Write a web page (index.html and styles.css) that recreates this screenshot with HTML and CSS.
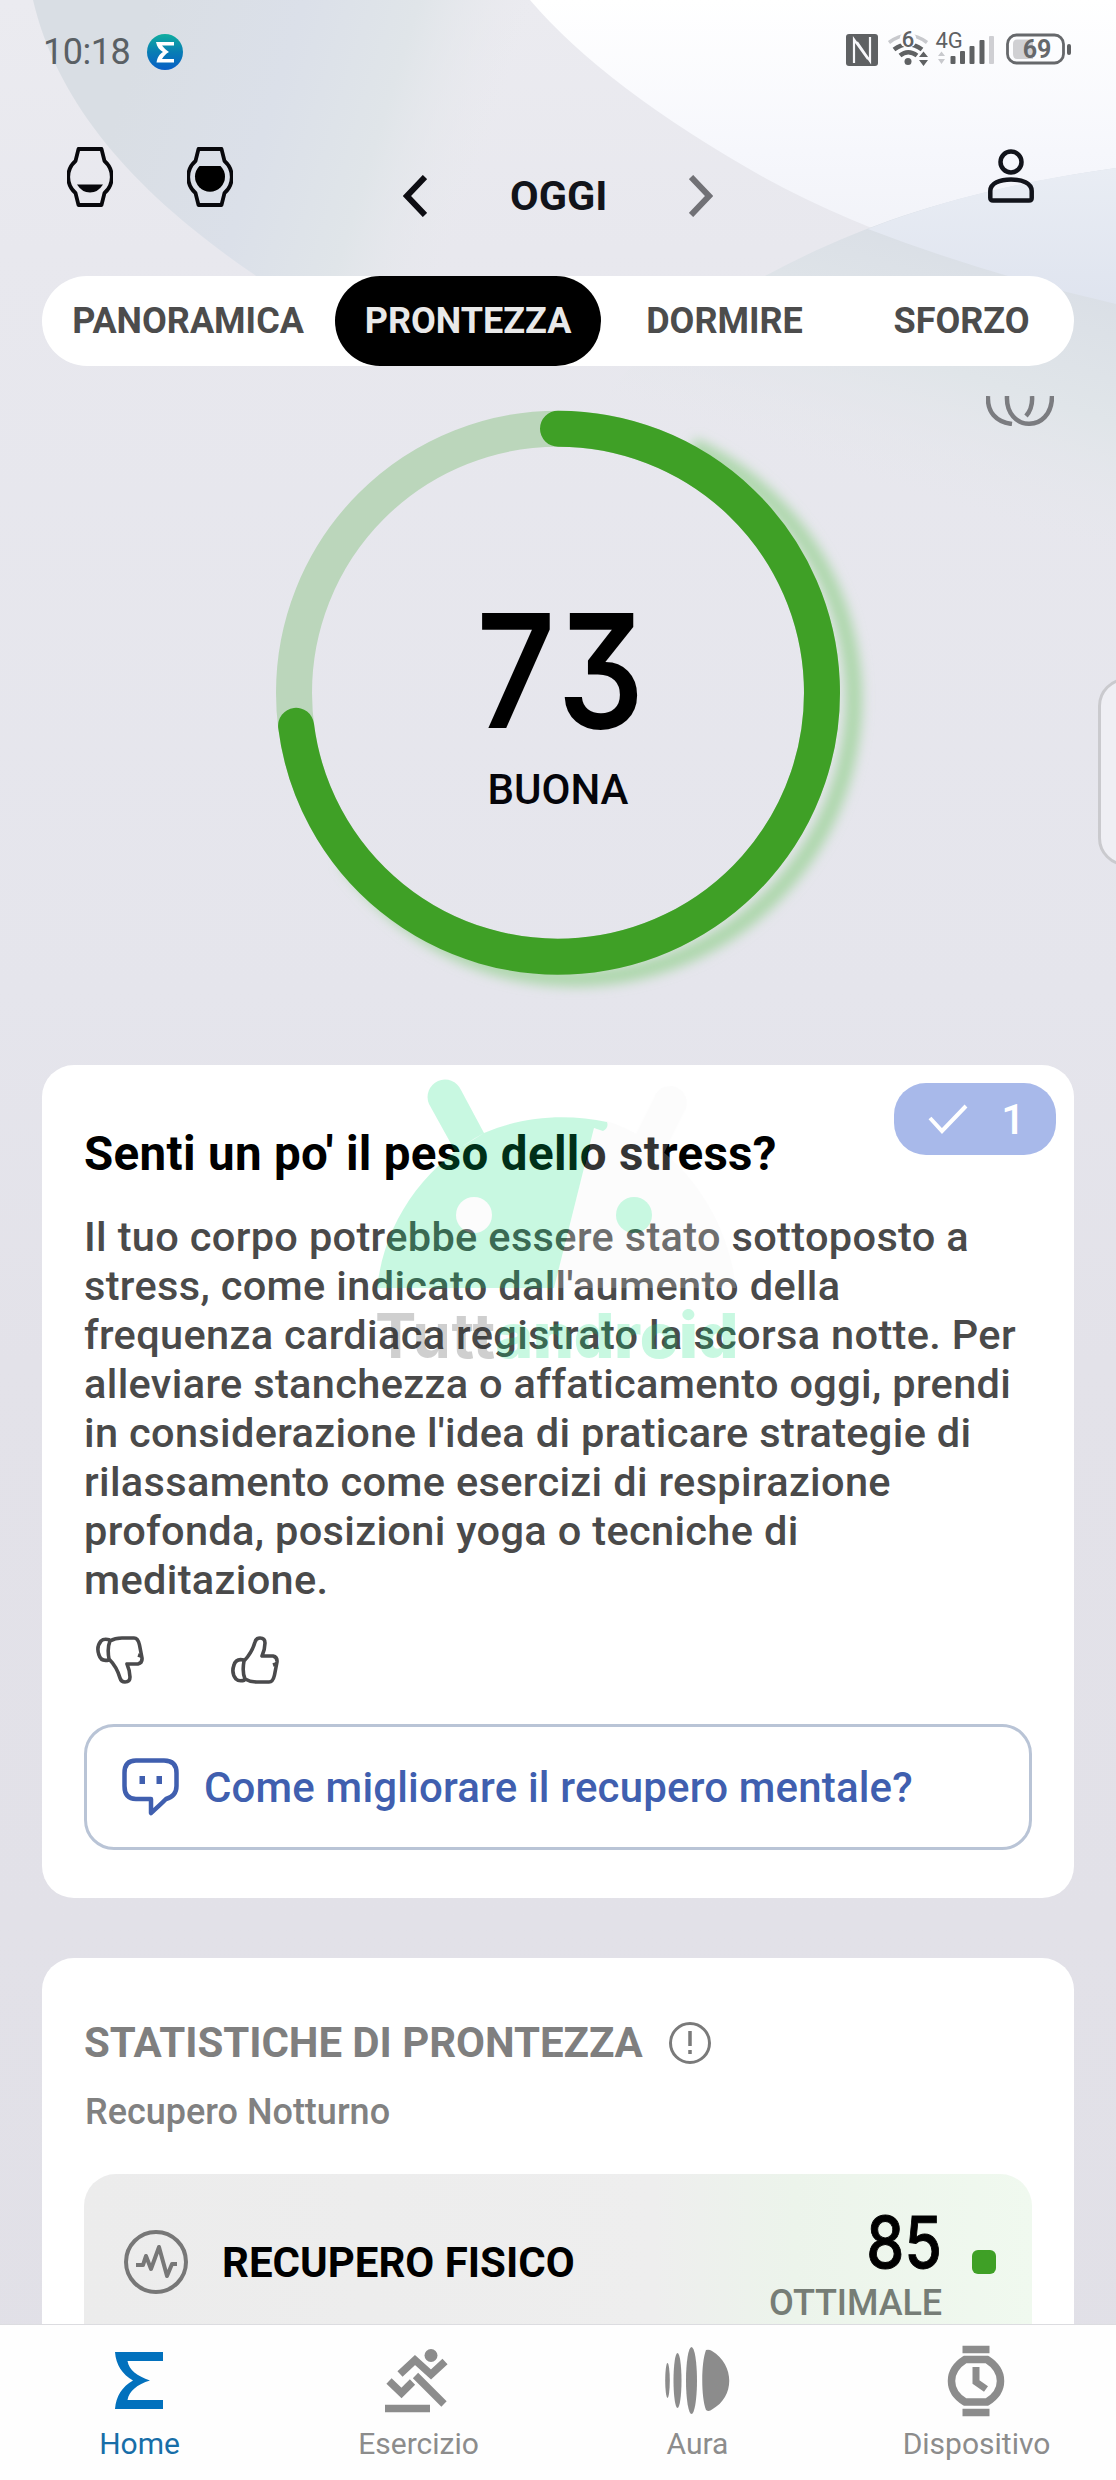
FILE: index.html
```html
<!DOCTYPE html>
<html lang="it">
<head>
<meta charset="utf-8">
<title>Prontezza</title>
<link rel="stylesheet" href="styles.css">
</head>
<body>
<div class="app">
  <svg class="backdrop" viewBox="0 0 1116 2480" aria-hidden="true">
    <defs>
      <linearGradient id="base" x1="0" y1="0" x2="0" y2="1"><stop offset="0" stop-color="#ebebf0"/><stop offset=".1" stop-color="#e8e8ee"/><stop offset=".4" stop-color="#e5e5ec"/><stop offset=".55" stop-color="#e3e2e9"/><stop offset="1" stop-color="#e1e0e7"/></linearGradient>
      <linearGradient id="left" gradientUnits="userSpaceOnUse" x1="120" y1="100" x2="470" y2="209"><stop offset="0" stop-color="#d9dee4"/><stop offset=".4" stop-color="#dbe0e9"/><stop offset=".7" stop-color="#e0e5e9"/><stop offset="1" stop-color="#e8e9ed" stop-opacity="0"/></linearGradient>
      <linearGradient id="white" x1="0" y1="0" x2="0" y2="1"><stop offset="0" stop-color="#ffffff"/><stop offset=".5" stop-color="#f6f7fc"/><stop offset="1" stop-color="#eeeff5"/></linearGradient>
      <linearGradient id="right" gradientUnits="userSpaceOnUse" x1="950" y1="200" x2="860" y2="480"><stop offset="0" stop-color="#d8dde5"/><stop offset=".55" stop-color="#e0e5e9"/><stop offset="1" stop-color="#e6e7ec" stop-opacity="0"/></linearGradient>
      <linearGradient id="cross" x1="0" y1="0" x2="0" y2="1"><stop offset="0" stop-color="#e9edf4"/><stop offset="1" stop-color="#dfe4ef"/></linearGradient>
    </defs>
    <rect width="1116" height="2480" fill="url(#base)"/>
    <path d="M33 0C60 115 150 210 290 298H600V0Z" fill="url(#left)"/>
    <path d="M530 0Q605 88 765 178Q900 252 1116 304V0Z" fill="url(#white)"/>
    <path d="M1116 168C960 190 860 225 765 276C680 320 600 380 540 480V640H1116Z" fill="url(#right)"/>
    <path d="M868 229C950 197 1030 180 1116 168V304Q985 274 868 229Z" fill="url(#cross)"/>
  </svg>

  <div class="statusbar">
    <span class="clock">10:18</span>
    <svg class="app-badge" viewBox="0 0 36 36"><defs><linearGradient id="bd" x1="0" y1="0" x2="0" y2="1"><stop offset="0" stop-color="#10ae9f"/><stop offset=".5" stop-color="#087db4"/><stop offset="1" stop-color="#075fc6"/></linearGradient></defs><circle cx="18" cy="18" r="18" fill="url(#bd)"/><path d="M9 8H27V11.400H15C17 14 19 16 22 18C19 19.500 17 22 15 25H27V28.400H9.500C10.500 23 12.500 20 16 18C12.500 16 10 13 9 8Z" fill="#fff"/></svg>
    <svg class="status-icons" viewBox="0 -8 230 48">
      <g fill="#5f6163">
        <rect x="0" y="3" width="32" height="32" rx="3"/>
        <g transform="translate(40 0)">
          <path d="M3 11.500Q22 -3 41 11.500" fill="none" stroke="#c8c9cd" stroke-width="3.500"/>
          <path d="M8 18.500Q22 8 36 18.500M14 24.500Q22 18 31 24.500" fill="none" stroke="#5f6163" stroke-width="4.500"/>
          <circle cx="22" cy="8.500" r="8.500" fill="#fcfcff"/>
          <circle cx="22" cy="30.500" r="3.500"/>
          <path d="M33 26L37.500 20.500L42 26ZM33 29L37.500 35L42 29Z"/>
        </g>
        <path d="M92 25L95.500 20.500L99 25ZM92 28L95.500 33L99 28Z" fill="#c8c9cd"/>
        <rect x="104.500" y="25" width="5" height="8" rx="1"/><rect x="114" y="20" width="5" height="13" rx="1"/><rect x="123.500" y="15" width="5" height="18" rx="1"/><rect x="133.500" y="9" width="5" height="24" rx="1"/><rect x="143" y="5" width="5" height="28" rx="1" fill="#cfcfd3"/>
        <rect x="161.500" y="4" width="56" height="28" rx="9" fill="none" stroke="#66686b" stroke-width="2.800"/>
        <path d="M171 8.500H187V28H171Q167 28 167 23V13Q167 8.500 171 8.500Z" fill="#d0d0d3"/>
        <rect x="221" y="13" width="4" height="11" rx="2"/>
      </g>
      <path d="M8 32V8.500L22 28M24 6V30L11 11" fill="none" stroke="#f8f8fb" stroke-width="2.200"/>
      <text x="62" y="16" text-anchor="middle" class="st-6">6</text>
      <text x="89.500" y="16.500" class="st-4g">4G</text>
      <text x="191" y="26.500" text-anchor="middle" class="st-69">69</text>
    </svg>
  </div>

  <header class="header">
    <div class="watches">
      <svg viewBox="0 0 46 60" class="watch"><path d="M11.500 2H34.500L37.500 14A21.200 21.200 0 0 1 37.500 46L34.500 58H11.500L8.500 46A21.200 21.200 0 0 1 8.500 14Z" fill="none" stroke="#08080c" stroke-width="3.800" stroke-linejoin="round"/><path d="M10 37.500H36Q31 45.500 23 45.500T10 37.500Z" fill="#08080c"/></svg>
      <svg viewBox="0 0 46 60" class="watch"><path d="M11.500 2H34.500L37.500 14A21.200 21.200 0 0 1 37.500 46L34.500 58H11.500L8.500 46A21.200 21.200 0 0 1 8.500 14Z" fill="none" stroke="#08080c" stroke-width="3.800" stroke-linejoin="round"/><path d="M12.500 19H33.500A15 15 0 1 1 12.500 19Z" fill="#000"/></svg>
    </div>
    <div class="day-nav">
      <svg viewBox="0 0 24 42" class="chev"><path d="M22 2L4 21L22 40" fill="none" stroke="#0d0d12" stroke-width="6"/></svg>
      <span class="day">OGGI</span>
      <svg viewBox="0 0 24 42" class="chev"><path d="M2 2L20 21L2 40" fill="none" stroke="#717176" stroke-width="6"/></svg>
    </div>
    <svg viewBox="0 0 46 54" class="person"><circle cx="23" cy="13" r="10.500" fill="none" stroke="#12141b" stroke-width="4.500"/><path d="M5 51.500Q2.300 51.500 2.300 49V42C2.300 34 12 30.500 23 30.500S43.700 34 43.700 42V49Q43.700 51.500 41 51.500Z" fill="none" stroke="#12141b" stroke-width="4.500"/></svg>
  </header>

  <nav class="tabs">
    <span class="tab t1">PANORAMICA</span>
    <span class="tab t2 active">PRONTEZZA</span>
    <span class="tab t3">DORMIRE</span>
    <span class="tab t4">SFORZO</span>
  </nav>

  <main class="content">
    <section class="score">
      <svg class="rings" viewBox="0 0 68 30"><path d="M2 0C1 16 10 26 26 28M21 0C19 36 66 38 66 0M46 0Q47 12 40 20" fill="none" stroke="#7b7c80" stroke-width="4.500"/></svg>
      <svg class="gauge" viewBox="250 380 640 640">
        <defs><filter id="glow" x="-20%" y="-20%" width="140%" height="140%"><feGaussianBlur stdDeviation="6"/></filter></defs>
        <path d="M692 446A279 279 0 1 1 346 859" fill="none" stroke="#9bd196" stroke-opacity=".75" stroke-width="17" filter="url(#glow)"/>
        <circle cx="558" cy="692.700" r="264" fill="none" stroke="#bbd6bb" stroke-width="36"/>
        <path d="M558 428.700A264 264 0 1 1 296.080 725.800" fill="none" stroke="#3fa026" stroke-width="36" stroke-linecap="round"/>
      </svg>
      <div class="score-label"><span class="score-num">73</span><span class="score-word">BUONA</span></div>
      <div class="edge-handle"></div>
    </section>

    <section class="card insight">
      <div class="count-badge"><svg viewBox="0 0 40 30"><path d="M2 14L14 27L38 2" fill="none" stroke="#fff" stroke-width="4"/></svg><span>1</span></div>
      <h2 class="insight-title">Senti un po' il peso dello stress?</h2>
      <p class="insight-text"><span class="ln">Il tuo corpo potrebbe essere stato sottoposto a</span><span class="ln">stress, come indicato dall'aumento della</span><span class="ln">frequenza cardiaca registrato la scorsa notte. Per</span><span class="ln">alleviare stanchezza o affaticamento oggi, prendi</span><span class="ln">in considerazione l'idea di praticare strategie di</span><span class="ln">rilassamento come esercizi di respirazione</span><span class="ln">profonda, posizioni yoga o tecniche di</span><span class="ln">meditazione.</span></p>
      <div class="votes">
        <svg viewBox="0 0 48 48" class="thumb down"><use href="#thumb"/></svg>
        <svg viewBox="0 0 48 48" class="thumb"><g id="thumb" fill="none" stroke="#4a4a4c" stroke-width="3.600" stroke-linejoin="round"><path d="M13 25C18 20 22 13 24 6Q25 2 29 2Q34 2 34 7Q34 13 31 20H42Q46.500 21 46 26L43.500 39Q42 46 38 46H26Q19 46 14 43Q11 36 13 25Z"/><path d="M13 24Q5 22 3 29Q0 37 5 43Q8 46 14 44M45 28L42 29"/></g></svg>
      </div>
      <div class="ask">
        <svg viewBox="0 0 58 58" class="bot"><path d="M14 2.500H42Q54.500 2.500 54.500 15V28Q54.500 38 44 41Q38 47 29 55V41H14Q2.500 41 2.500 28V15Q2.500 2.500 14 2.500Z" fill="none" stroke="#405faf" stroke-width="4.500" stroke-linejoin="round"/><path d="M17.500 18H23V26H17.500ZM34.500 18H40V26H34.500Z" fill="#405faf"/></svg>
        <span>Come migliorare il recupero mentale?</span>
      </div>
      <div class="watermark">
        <svg viewBox="377 1075 360 215">
          <path fill="#f3f3f3" stroke="none" d="M607 1121C680 1145 728 1215 736 1288H554L594 1130Z"/>
          <path d="M670 1103L645 1153" stroke="#f3f3f3" stroke-width="34" stroke-linecap="round"/>
          <path fill="#00df77" d="M377 1288C385 1220 425 1165 484 1133L461 1090A17 17 0 0 0 429 1104L455 1151L484 1133C525 1115 570 1114 607 1122Q609 1128 603 1131L594 1128L554 1288Z"/>
          <circle cx="474" cy="1215" r="18" fill="#f3f3f3"/><circle cx="634" cy="1215" r="18" fill="#00df77"/>
        </svg>
        <span class="wm-text"><span>Tutt</span><b>android</b></span>
      </div>
    </section>

    <section class="card stats">
      <h3 class="stats-title"><span>STATISTICHE DI PRONTEZZA</span><svg viewBox="0 0 42 42"><circle cx="21" cy="21" r="19.500" fill="none" stroke="#7a7a7a" stroke-width="3"/><path d="M21 9V24M21 28V32" stroke="#7a7a7a" stroke-width="3.500"/></svg></h3>
      <p class="stats-sub">Recupero Notturno</p>
      <div class="metric">
        <svg viewBox="0 0 64 64" class="pulse"><circle cx="32" cy="32" r="30" fill="none" stroke="#777" stroke-width="4"/><path d="M12 35H19L22 26L27 39L35 17L43 46L48 34H53" fill="none" stroke="#777" stroke-width="4" stroke-linejoin="round"/></svg>
        <span class="metric-name">RECUPERO FISICO</span>
        <div class="metric-val"><span class="metric-num">85</span><span class="metric-word">OTTIMALE</span></div>
        <i class="dot"></i>
      </div>
    </section>
  </main>

  <nav class="bottom">
    <a class="item on"><svg viewBox="0 0 72 72"><path d="M12 7H60V16H24.500C26 25 34 31 47 35.500C34 39.500 26 46 24.500 55H60V64H12C13 51 19 42 30 35.500C19 29 13 20 12 7Z" fill="#0271bd"/></svg><span>Home</span></a>
    <a class="item"><svg viewBox="0 0 72 72"><g fill="none" stroke="#8c8c8c" stroke-width="7.500"><path d="M18 29L33 15L49 29.500L63 16.500M33.500 30.500L62 59M7 36L19.500 48L30.500 37"/><path d="M3 63.500H48"/></g><circle cx="49" cy="10.500" r="6.500" fill="#8c8c8c"/></svg><span>Esercizio</span></a>
    <a class="item"><svg viewBox="0 0 72 72"><g fill="#8c8c8c"><ellipse cx="6.500" cy="35.500" rx="2.300" ry="17.500"/><ellipse cx="16.500" cy="35.500" rx="4" ry="27.500"/><ellipse cx="30.500" cy="35.500" rx="5.500" ry="33.500"/><path d="M45 5Q48 4 51 6C74 20 74 52 51 64.500Q48 67 45 65C40 52 40 18 45 5Z"/></g></svg><span>Aura</span></a>
    <a class="item"><svg viewBox="0 0 72 72"><g fill="none" stroke="#8c8c8c" stroke-width="7.500"><path d="M22.500 4.500H49.500M22.500 67.500H49.500"/><path d="M25 14.500H47C65 26 65 46 47 57H25C7 46 7 26 25 14.500Z"/><path d="M36 22V37L46 44" stroke-width="7"/></g></svg><span>Dispositivo</span></a>
  </nav>
</div>
</body>
</html>
```
FILE: styles.css
```css
* { box-sizing: border-box; margin: 0; padding: 0; }
body { font-family: Roboto, "Liberation Sans", sans-serif; background: #e3e3e9; }
svg { display: block; flex: none; }
.app { position: relative; width: 1116px; height: 2480px; overflow: hidden; display: flex; flex-direction: column; }
.backdrop { position: absolute; inset: 0; width: 1116px; height: 2480px; z-index: -1; }

.statusbar { height: 104px; display: flex; align-items: center; padding: 0 43px 0 43px; }
.clock { font-size: 36px; line-height: 42px; color: #5a6064; letter-spacing: -.5px; width: 104px; white-space: nowrap; }
.app-badge { width: 36px; height: 36px; }
.status-icons { width: 230px; height: 48px; margin-left: auto; margin-right: -3px; margin-top: -11px; }
.st-6 { font: 500 22px Roboto, sans-serif; fill: #5f6163; }
.st-4g { font: 400 22px Roboto, sans-serif; fill: #5f6163; }
.st-69 { font: 700 25px Roboto, sans-serif; fill: #66686b; }

.header { height: 172px; padding: 43px 82px 0 67px; display: flex; justify-content: space-between; align-items: flex-start; }
.watches { display: flex; gap: 74px; width: 337px; }
.watch { width: 46px; height: 60px; }
.day-nav { display: flex; align-items: center; justify-content: space-between; width: 310px; height: 44px; margin-top: 27px; }
.chev { width: 24px; height: 42px; }
.day { font-size: 41.500px; line-height: 44px; font-weight: 700; color: #12141a; margin-top: -1px; padding-left: 1px; }
.person { width: 46px; height: 54px; margin: 2px 0 0 275px; }

.tabs { height: 90px; width: 1032px; margin-left: 42px; border-radius: 45px; background: #fff; display: grid; grid-template-columns: 293px 266px 249px 224px; }
.tab { display: flex; align-items: center; justify-content: center; font-size: 36px; font-weight: 700; color: #4c4c4c; border-radius: 45px; white-space: nowrap; }
.tab.active { background: #000; color: #e9e9e9; }
.t1, .t4 { padding-right: 1px; }
.t3 { padding-right: 2px; }

.content { display: flex; flex-direction: column; height: 1958px; overflow: hidden; }
.score { position: relative; height: 699px; flex: none; display: flex; justify-content: center; padding-top: 14px; }
.gauge { width: 640px; height: 640px; margin-left: 24px; }
.rings { position: absolute; left: 986px; top: 30px; width: 68px; height: 30px; }
.score-label { position: absolute; left: 276px; width: 564px; top: 223px; display: flex; flex-direction: column; align-items: center; }
.score-num { font: 500 155px/140px Inter, Roboto, sans-serif; font-feature-settings: "cv09" 1; transform: scaleX(.88); color: #000; margin-top: 12px; letter-spacing: 6px; padding-left: 12px; -webkit-text-stroke: 2px #000; }
.score-word { font-size: 42px; font-weight: 500; line-height: 50px; margin-top: 24px; color: #05050a; }
.edge-handle { position: absolute; left: 1098px; top: 312px; width: 60px; height: 188px; border: 3px solid #cacace; border-radius: 28px; background: #efeff4; }

.card { width: 1032px; margin-left: 42px; border-radius: 32px; background: #fff; flex: none; }
.insight { position: relative; height: 833px; padding: 61px 42px 0 42px; }
.count-badge { position: absolute; right: 18px; top: 18px; width: 162px; height: 72px; border-radius: 32px; background: #a8b9ea; display: flex; align-items: center; padding: 0 31px 0 34px; justify-content: space-between; color: #fff; font: 500 42px Roboto, sans-serif; }
.count-badge svg { width: 40px; height: 30px; }
.insight-title { font-size: 47.500px; line-height: 56px; font-weight: 700; letter-spacing: .33px; color: #000; white-space: nowrap; }
.insight-text { margin-top: 30px; font-size: 41.500px; font-weight: 500; letter-spacing: .34px; color: #4a4a4a; }
.ln { display: block; line-height: 49px; height: 49px; white-space: nowrap; }
.votes { display: flex; gap: 87px; margin: 32px 0 0 12px; }
.thumb { width: 48px; height: 48px; }
.down { transform: scaleY(-1); }
.ask { margin-top: 40px; height: 126px; border: 3px solid #b9c4d6; border-radius: 30px; display: flex; align-items: center; padding-left: 35px; font-size: 42px; font-weight: 500; letter-spacing: .17px; color: #405faf; white-space: nowrap; }
.bot { width: 58px; height: 58px; margin-right: 24px; }
.watermark { position: absolute; left: 335px; top: 10px; width: 360px; opacity: .21; }
.watermark svg { width: 360px; height: 215px; }
.wm-text { display: block; font: 700 62px/62px Inter, sans-serif; letter-spacing: .5px; white-space: nowrap; margin: 15px 0 0 -2px; color: #212121; }
.wm-text b { color: #00df77; }

.stats { margin-top: 60px; height: 500px; padding: 60px 42px 0; }
.stats-title { display: flex; align-items: center; gap: 26px; font-size: 42px; line-height: 50px; font-weight: 700; letter-spacing: -.06px; color: #7f7f7f; white-space: nowrap; }
.stats-title svg { width: 42px; height: 42px; }
.stats-sub { font-size: 36px; line-height: 42px; font-weight: 500; color: #818181; margin: 23px 0 0 1px; }
.metric { margin-top: 41px; height: 220px; border-radius: 32px; background: linear-gradient(90deg, #ececec 0%, #eeeeee 60%, #ecf4eb 75%, #f0f9ef 100%); display: flex; padding: 0 36px 0 40px; }
.pulse { width: 64px; height: 64px; margin-top: 56px; }
.metric-name { font-size: 42px; line-height: 50px; font-weight: 700; color: #000; margin: 64px 0 0 34px; white-space: nowrap; }
.metric-val { margin-left: auto; display: flex; flex-direction: column; align-items: flex-end; }
.metric-num { font: 500 72px/84px Inter, sans-serif; -webkit-text-stroke: 1px #000; transform: scaleX(.84); transform-origin: right; margin-top: 26px; margin-right: -1px; color: #000; }
.metric-word { font-size: 36px; line-height: 42px; font-weight: 500; color: #767d76; margin-top: -2px; letter-spacing: -.1px; margin-right: -1px; }
.dot { width: 24px; height: 24px; border-radius: 6px; background: #3fa026; margin: 76px 0 0 31px; }

.bottom { height: 156px; background: #fefefe; border-top: 1px solid #dcdce0; display: grid; grid-template-columns: repeat(4, 1fr); z-index: 1; }
.item { display: flex; flex-direction: column; align-items: center; padding-top: 20px; font-size: 30px; line-height: 36px; color: #8c8c8c; }
.item svg { width: 72px; height: 72px; margin-right: 2px; }
.item span { margin-top: 9px; }
.item.on { color: #176ea8; }
```
